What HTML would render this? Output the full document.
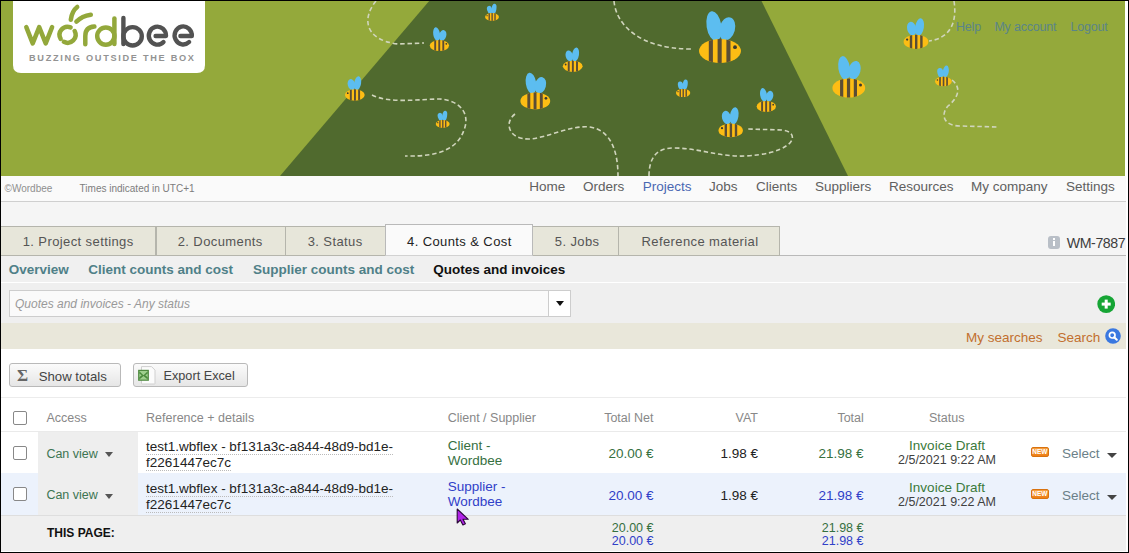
<!DOCTYPE html>
<html><head><meta charset="utf-8">
<style>
*{margin:0;padding:0;box-sizing:border-box}
html,body{width:1129px;height:553px;overflow:hidden;background:#fff;font-family:"Liberation Sans",sans-serif}
.a{position:absolute;white-space:nowrap}
#frame{position:absolute;left:0;top:0;width:1129px;height:553px;border-top:1px solid #000;border-left:1px solid #000;border-right:1px solid #000;border-bottom:1px solid #000;pointer-events:none;z-index:50}
#wr{position:absolute;left:1126px;top:1px;width:2px;height:551px;background:#fff;z-index:49}
#wb{position:absolute;left:1px;top:551px;width:1127px;height:1px;background:#fff;z-index:49}
</style></head><body>

<!-- banner -->
<svg class="a" style="left:0;top:0" width="1129" height="177" viewBox="0 0 1129 177">
<defs>
<g id="bee">
  <clipPath id="bc"><ellipse cx="0" cy="0" rx="21" ry="12"/></clipPath>
  <ellipse cx="-6" cy="-25" rx="7.4" ry="15" transform="rotate(-9 -6 -25)" fill="#5cbdf0"/>
  <ellipse cx="7.2" cy="-22.2" rx="7.8" ry="11.8" transform="rotate(15 7.2 -22.2)" fill="#5cbdf0"/>
  <ellipse cx="0" cy="0" rx="21" ry="12" fill="#fdbd14"/>
  <g clip-path="url(#bc)" fill="#5a4d35">
    <rect x="-11.2" y="-13" width="4.1" height="26"/>
    <rect x="-2.4" y="-13" width="4.1" height="26"/>
    <rect x="6.4" y="-13" width="4.1" height="26"/>
  </g>
  <circle cx="15" cy="-3.8" r="1.9" fill="#3a3a30"/>
</g>
</defs>
<rect x="0" y="0" width="1125" height="176" fill="#94a93b"/>
<polygon points="430,0 761,0 848,176 280,176" fill="#506a2e"/>
<g fill="none" stroke="#d0d5bd" stroke-width="1.6" stroke-dasharray="4.5 2.8">
  <path d="M376,1 C362,18 364,40 398,44 L424,43"/>
  <path d="M372,95 C390,104 420,99 440,99 C462,101 470,115 464,130 C458,148 440,157 405,156"/>
  <path d="M614,1 C616,25 640,49 691,49"/>
  <path d="M515,114 C504,122 508,140 530,139 C550,137 570,125 590,127 C610,130 618,150 618,176"/>
  <path d="M649,176 C649,160 655,148 673,148 C700,148 718,157 745,156 C765,155 779,151 786,146 C796,140 794,131 782,130 L748,129"/>
  <path d="M954,1 C957,20 952,38 929,41"/>
  <path d="M952,80 C962,88 958,98 948,106 C940,115 944,126 960,126 L998,127"/>
</g>
<use href="#bee" transform="translate(720,51) scale(1)"/>
<use href="#bee" transform="translate(535.3,101) scale(0.71)"/>
<use href="#bee" transform="translate(572.7,66.3) scale(-0.47,0.47)"/>
<use href="#bee" transform="translate(683.1,93) scale(-0.34,0.34)"/>
<use href="#bee" transform="translate(766.3,106.4) scale(0.46)"/>
<use href="#bee" transform="translate(730.7,130.4) scale(-0.58,0.58)"/>
<use href="#bee" transform="translate(916,41.8) scale(-0.59,0.59)"/>
<use href="#bee" transform="translate(848.8,88) scale(0.78,0.8)"/>
<use href="#bee" transform="translate(943.4,81.5) scale(-0.40,0.40)"/>
<use href="#bee" transform="translate(439.4,45.6) scale(0.46)"/>
<use href="#bee" transform="translate(354.8,95) scale(-0.47,0.47)"/>
<use href="#bee" transform="translate(442.7,124) scale(-0.33,0.33)"/>
<use href="#bee" transform="translate(492,17) scale(-0.33,0.33)"/>
<!-- logo box -->
<path d="M13,1 H205 V65 Q205,73 197,73 H21 Q13,73 13,65 Z" fill="#fff"/>
<g fill="none" stroke-width="4.5" stroke-linecap="round" stroke-linejoin="round">
  <g stroke="#93a83b">
    <polyline points="26.3,27.2 32.7,43.4 39.2,27.2 45.7,43.4 52.1,27.2"/>
    <path d="M70.6,27.38 A8,8 0 0 0 60.67,38.8"/>
    <path d="M63.84,41.86 A8,8 0 0 0 74.66,31.04"/>
    <path d="M70.8,19.8 C71.5,14 74,9.5 77.2,7"/>
    <path d="M76.4,21.6 C80,18 85,15.5 90.8,14.7"/>
    <path d="M85.3,44.2 V36 C85.3,30 89,27 94.4,26.6"/>
    <circle cx="105.8" cy="36.1" r="8.6"/>
    <path d="M114.4,18.5 V44"/>
  </g>
  <g stroke="#525252" stroke-width="4.4">
    <path d="M123.4,18 V44"/>
    <circle cx="132.6" cy="36.3" r="9.2"/>
    <path d="M155.6,36 H166 A8.6,9 0 1 0 163.5,42"/>
    <path d="M180.4,36 H191.8 A8.6,9 0 1 0 189.1,42"/>
  </g>
</g>
<text x="29" y="61.2" font-family="Liberation Sans" font-weight="bold" font-size="9.2" fill="#939393" textLength="165" lengthAdjust="spacing">BUZZING OUTSIDE THE BOX</text>
</svg>

<!-- top links -->
<div class="a" style="left:956px;top:20.9px;font-size:12.5px;line-height:12.5px;color:#5a8588;letter-spacing:-0.2px">Help</div>
<div class="a" style="left:994.4px;top:20.9px;font-size:12.5px;line-height:12.5px;color:#5a8588;letter-spacing:-0.2px">My account</div>
<div class="a" style="left:1070.6px;top:20.9px;font-size:12.5px;line-height:12.5px;color:#5a8588;letter-spacing:-0.2px">Logout</div>

<!-- menu bar -->
<div class="a" style="left:1px;top:176px;width:1125px;height:26px;background:#fafafa;border-bottom:1px solid #cfcfcf"></div>
<div class="a" style="left:4.6px;top:183.7px;font-size:10px;line-height:10px;color:#8f8f8f">©Wordbee</div>
<div class="a" style="left:79.6px;top:183.7px;font-size:10px;line-height:10px;color:#7d7d7d">Times indicated in UTC+1</div>
<div class="a" id="menu" style="top:179.5px;font-size:13.5px;line-height:13.5px;color:#606060">
  <span class="a" style="left:529.3px">Home</span>
  <span class="a" style="left:583px">Orders</span>
  <span class="a" style="left:642.7px;color:#4a68b2">Projects</span>
  <span class="a" style="left:709px">Jobs</span>
  <span class="a" style="left:756px">Clients</span>
  <span class="a" style="left:815px">Suppliers</span>
  <span class="a" style="left:889px">Resources</span>
  <span class="a" style="left:971px">My company</span>
  <span class="a" style="left:1066px">Settings</span>
</div>

<!-- gray band + tabs -->
<div class="a" style="left:1px;top:202px;width:1126px;height:53px;background:#f5f5f5"></div>
<div class="a" style="left:1px;top:255px;width:1126px;height:1px;background:#b9b9b9"></div>
<div class="a tab" style="left:1px;top:226px;width:155px;height:30px;background:#e7e6da;border:1px solid #b5b5ac;border-left:none"></div>
<div class="a tab" style="left:156px;top:226px;width:130px;height:30px;background:#e7e6da;border:1px solid #b5b5ac"></div>
<div class="a tab" style="left:286px;top:226px;width:100px;height:30px;background:#e7e6da;border:1px solid #b5b5ac;border-left:none"></div>
<div class="a tab" style="left:385px;top:224px;width:148px;height:32px;background:#fafafa;border:1px solid #b9b9b9;border-bottom:1px solid #d2d2d2"></div>
<div class="a tab" style="left:533px;top:226px;width:86px;height:30px;background:#e7e6da;border:1px solid #b5b5ac;border-left:none"></div>
<div class="a tab" style="left:619px;top:226px;width:161px;height:30px;background:#e7e6da;border:1px solid #b5b5ac;border-left:none"></div>
<div class="a" style="top:234.5px;font-size:13px;line-height:13px;color:#555;letter-spacing:0.4px">
  <span class="a" style="left:22.7px">1. Project settings</span>
  <span class="a" style="left:177.7px">2. Documents</span>
  <span class="a" style="left:307.7px">3. Status</span>
  <span class="a" style="left:407px;color:#222">4. Counts &amp; Cost</span>
  <span class="a" style="left:554.8px">5. Jobs</span>
  <span class="a" style="left:641.5px">Reference material</span>
</div>
<div class="a" style="left:1048.4px;top:235.5px;width:11.5px;height:13px;border-radius:3px;background:#b9bfc7"></div>
<div class="a" style="left:1053px;top:238px;width:2.2px;height:2px;background:#fff"></div>
<div class="a" style="left:1053px;top:241px;width:2.2px;height:5px;background:#fff"></div>
<div class="a" style="left:1066.8px;top:235.9px;font-size:14.2px;line-height:14.2px;color:#3d3d3d;letter-spacing:-0.45px">WM-7887</div>

<!-- sub nav -->
<div class="a" style="left:1px;top:256px;width:1126px;height:26px;background:#f0f0f0"></div>
<div class="a" style="left:1px;top:282.6px;width:1126px;height:1.4px;background:#fff"></div>
<div class="a" style="top:263.2px;font-size:13.5px;line-height:13.5px;font-weight:bold;color:#4f8088">
  <span class="a" style="left:8.7px">Overview</span>
  <span class="a" style="left:88.2px">Client counts and cost</span>
  <span class="a" style="left:253px">Supplier counts and cost</span>
  <span class="a" style="left:433.3px;color:#111">Quotes and invoices</span>
</div>

<!-- filter -->
<div class="a" style="left:1px;top:283px;width:1126px;height:40px;background:#efefef"></div>
<div class="a" style="left:8.5px;top:290px;width:562px;height:27px;background:#fafafa;border:1px solid #cdcdcd"></div>
<div class="a" style="left:548px;top:290px;width:22.5px;height:27px;background:#fff;border:1px solid #cdcdcd"></div>
<div class="a" style="left:555.5px;top:300.5px;width:0;height:0;border-left:4px solid transparent;border-right:4px solid transparent;border-top:5px solid #111"></div>
<div class="a" style="left:15px;top:297.8px;font-size:12px;line-height:12px;font-style:italic;color:#999">Quotes and invoices - Any status</div>
<svg class="a" style="left:1097px;top:294.5px" width="18" height="18" viewBox="0 0 18 18">
<circle cx="9.2" cy="9.1" r="8.9" fill="#16a535"/>
<rect x="4.7" y="7.6" width="9" height="3" fill="#fff"/><rect x="7.7" y="4.6" width="3" height="9" fill="#fff"/>
</svg>

<!-- search band -->
<div class="a" style="left:1px;top:323px;width:1126px;height:26px;background:#e9e7da"></div>
<div class="a" style="left:965.9px;top:330.5px;font-size:13.5px;line-height:13.5px;color:#c26f2e">My searches</div>
<div class="a" style="left:1057.5px;top:330.5px;font-size:13.5px;line-height:13.5px;color:#c26f2e">Search</div>
<svg class="a" style="left:1104.5px;top:327.7px" width="16" height="16" viewBox="0 0 16 16">
<circle cx="8" cy="8" r="7.8" fill="#3a78e0"/>
<circle cx="7.2" cy="7.2" r="2.8" fill="none" stroke="#fff" stroke-width="1.7"/>
<line x1="9.2" y1="9.2" x2="11.8" y2="11.8" stroke="#fff" stroke-width="2" stroke-linecap="round"/>
</svg>

<!-- buttons -->
<div class="a" style="left:8.5px;top:363.4px;width:112px;height:23.5px;border:1px solid #b9b9b9;border-radius:3px;background:linear-gradient(#fbfbfb,#e6e6e6)"></div>
<div class="a" style="left:17px;top:366px;font-size:17px;line-height:20px;color:#666;font-family:'Liberation Serif',serif;font-weight:bold">Σ</div>
<div class="a" style="left:38.7px;top:369.8px;font-size:13.2px;line-height:13.2px;color:#444">Show totals</div>
<div class="a" style="left:132.9px;top:363.4px;width:115px;height:23.5px;border:1px solid #b9b9b9;border-radius:3px;background:linear-gradient(#fbfbfb,#e6e6e6)"></div>
<svg class="a" style="left:137px;top:366px" width="20" height="19" viewBox="0 0 20 19">
<path d="M4.5,0.6 H14.5 L18,4.1 V17.4 Q18,18 17.4,18 H5.1 Q4.5,18 4.5,17.4 Z" fill="#fbfbfb" stroke="#cfcfcf" stroke-width="1"/>
<rect x="1.1" y="3.8" width="10.8" height="11" fill="#4f8a40"/>
<rect x="2.3" y="5" width="8.4" height="8.6" fill="#9fd08e"/>
<path d="M2.3,5.2 L6.5,9.3 L10.7,5.2 V7.6 L8.2,9.3 L10.7,11.2 V13.6 L6.5,10 L2.3,13.6 V11.2 L4.8,9.3 L2.3,7.6 Z" fill="#4a8a3c"/>
</svg>
<div class="a" style="left:163.5px;top:370px;font-size:12.7px;line-height:12.7px;color:#444">Export Excel</div>
<div class="a" style="left:1px;top:397px;width:1126px;height:1px;background:#ececec"></div>

<!-- table -->
<div class="a" style="left:1px;top:431px;width:1126px;height:1px;background:#eaeaea"></div>
<div class="a" style="top:411.8px;font-size:12.5px;line-height:12.5px;color:#888">
  <span class="a" style="left:46.4px">Access</span>
  <span class="a" style="left:146.1px">Reference + details</span>
  <span class="a" style="left:447.7px">Client / Supplier</span>
  <span class="a" style="left:553px;width:100.5px;text-align:right">Total Net</span>
  <span class="a" style="left:658px;width:100px;text-align:right">VAT</span>
  <span class="a" style="left:763px;width:100.8px;text-align:right">Total</span>
  <span class="a" style="left:929px">Status</span>
</div>
<div class="a" style="left:12.8px;top:411.3px;width:14px;height:14px;border:1.5px solid #888;border-radius:2px;background:#fff"></div>

<!-- row 1 -->
<div class="a" style="left:1px;top:432px;width:1126px;height:41px;background:#fff"></div>
<div class="a" style="left:38px;top:432px;width:99.5px;height:83px;background:#eeeeee"></div>
<div class="a" style="left:1px;top:473px;width:1126px;height:42px;background:#ecf2fc"></div>
<div class="a" style="left:38px;top:473px;width:99.5px;height:42px;background:#eeeeee"></div>
<div class="a" style="left:1px;top:515px;width:1126px;height:36px;background:#efefef;border-top:1px solid #dedede"></div>

<div class="a" style="left:12.8px;top:445.5px;width:14px;height:14px;border:1.5px solid #888;border-radius:2px;background:#fff"></div>
<div class="a" style="left:12.8px;top:487px;width:14px;height:14px;border:1.5px solid #888;border-radius:2px;background:#fff"></div>

<div class="a" style="left:46.4px;top:447.5px;font-size:12.5px;line-height:12.5px;color:#3c7552">Can view</div>
<div class="a" style="left:105px;top:452px;width:0;height:0;border-left:4.5px solid transparent;border-right:4.5px solid transparent;border-top:5px solid #555"></div>
<div class="a" style="left:46.4px;top:489px;font-size:12.5px;line-height:12.5px;color:#3c7552">Can view</div>
<div class="a" style="left:105px;top:493.5px;width:0;height:0;border-left:4.5px solid transparent;border-right:4.5px solid transparent;border-top:5px solid #555"></div>

<div class="a" style="left:146.1px;top:438.9px;font-size:13.5px;line-height:16.5px;color:#222">
<span style="border-bottom:1px dotted #bbb">test1.wbflex - bf131a3c-a844-48d9-bd1e-</span><br><span style="border-bottom:1px dotted #bbb">f2261447ec7c</span></div>
<div class="a" style="left:146.1px;top:480.5px;font-size:13.5px;line-height:16.5px;color:#222">
<span style="border-bottom:1px dotted #bbb">test1.wbflex - bf131a3c-a844-48d9-bd1e-</span><br><span style="border-bottom:1px dotted #bbb">f2261447ec7c</span></div>

<div class="a" style="left:447.7px;top:438.4px;font-size:13.5px;line-height:15px;color:#36703f">Client -<br>Wordbee</div>
<div class="a" style="left:447.7px;top:478.8px;font-size:13.5px;line-height:15px;color:#3040c8">Supplier -<br>Wordbee</div>

<div class="a" style="left:553px;width:100.5px;text-align:right;top:446.8px;font-size:13.5px;line-height:13.5px;color:#36703f">20.00 €</div>
<div class="a" style="left:553px;width:100.5px;text-align:right;top:489.3px;font-size:13.5px;line-height:13.5px;color:#3040c8">20.00 €</div>
<div class="a" style="left:657px;width:101px;text-align:right;top:446.8px;font-size:13.5px;line-height:13.5px;color:#222">1.98 €</div>
<div class="a" style="left:657px;width:101px;text-align:right;top:489.3px;font-size:13.5px;line-height:13.5px;color:#222">1.98 €</div>
<div class="a" style="left:763px;width:100.5px;text-align:right;top:446.8px;font-size:13.5px;line-height:13.5px;color:#36703f">21.98 €</div>
<div class="a" style="left:763px;width:100.5px;text-align:right;top:489.3px;font-size:13.5px;line-height:13.5px;color:#3040c8">21.98 €</div>

<div class="a" style="left:867px;width:160px;text-align:center;top:439.3px;font-size:13.5px;line-height:13.5px;color:#3b7a3b">Invoice Draft</div>
<div class="a" style="left:867px;width:160px;text-align:center;top:454.3px;font-size:12.5px;line-height:12.5px;color:#404040">2/5/2021 9:22 AM</div>
<div class="a" style="left:867px;width:160px;text-align:center;top:480.8px;font-size:13.5px;line-height:13.5px;color:#3b7a3b">Invoice Draft</div>
<div class="a" style="left:867px;width:160px;text-align:center;top:495.8px;font-size:12.5px;line-height:12.5px;color:#404040">2/5/2021 9:22 AM</div>

<div class="a" style="left:1031px;top:447px;width:17.8px;height:10.4px;background:linear-gradient(#f7a040,#ee7e14);border:1px solid #d8720f;border-radius:2px;color:#fff;font-size:6.5px;line-height:8.4px;text-align:center;font-weight:bold;letter-spacing:0px;overflow:hidden">NEW</div>
<div class="a" style="left:1031px;top:488.6px;width:17.8px;height:10.4px;background:linear-gradient(#f7a040,#ee7e14);border:1px solid #d8720f;border-radius:2px;color:#fff;font-size:6.5px;line-height:8.4px;text-align:center;font-weight:bold;letter-spacing:0px;overflow:hidden">NEW</div>
<div class="a" style="left:1061.9px;top:447.3px;font-size:13.5px;line-height:13.5px;color:#6b7f88">Select</div>
<div class="a" style="left:1061.9px;top:488.8px;font-size:13.5px;line-height:13.5px;color:#6b7f88">Select</div>
<div class="a" style="left:1106.8px;top:453px;width:0;height:0;border-left:5px solid transparent;border-right:5px solid transparent;border-top:5px solid #444"></div>
<div class="a" style="left:1106.8px;top:494.5px;width:0;height:0;border-left:5px solid transparent;border-right:5px solid transparent;border-top:5px solid #444"></div>

<!-- footer -->
<div class="a" style="left:47px;top:526.5px;font-size:12px;line-height:12px;font-weight:bold;color:#111">THIS PAGE:</div>
<div class="a" style="left:553px;width:100.5px;text-align:right;top:521.7px;font-size:12.5px;line-height:12.5px;color:#36703f">20.00 €</div>
<div class="a" style="left:553px;width:100.5px;text-align:right;top:535px;font-size:12.5px;line-height:12.5px;color:#3040c8">20.00 €</div>
<div class="a" style="left:763px;width:100.5px;text-align:right;top:521.7px;font-size:12.5px;line-height:12.5px;color:#36703f">21.98 €</div>
<div class="a" style="left:763px;width:100.5px;text-align:right;top:535px;font-size:12.5px;line-height:12.5px;color:#3040c8">21.98 €</div>

<!-- cursor -->
<svg class="a" style="left:455px;top:506px" width="16" height="20" viewBox="0 0 16 20">
<path d="M2.2,3 L2.2,17 L5.3,14 L7.9,19 L10.4,17.8 L8,13.3 L13.3,13.3 Z" fill="#b024e8" stroke="#2a0838" stroke-width="1.1" stroke-linejoin="round"/>
</svg>

<div id="wr"></div><div id="wb"></div><div id="frame"></div>
</body></html>
